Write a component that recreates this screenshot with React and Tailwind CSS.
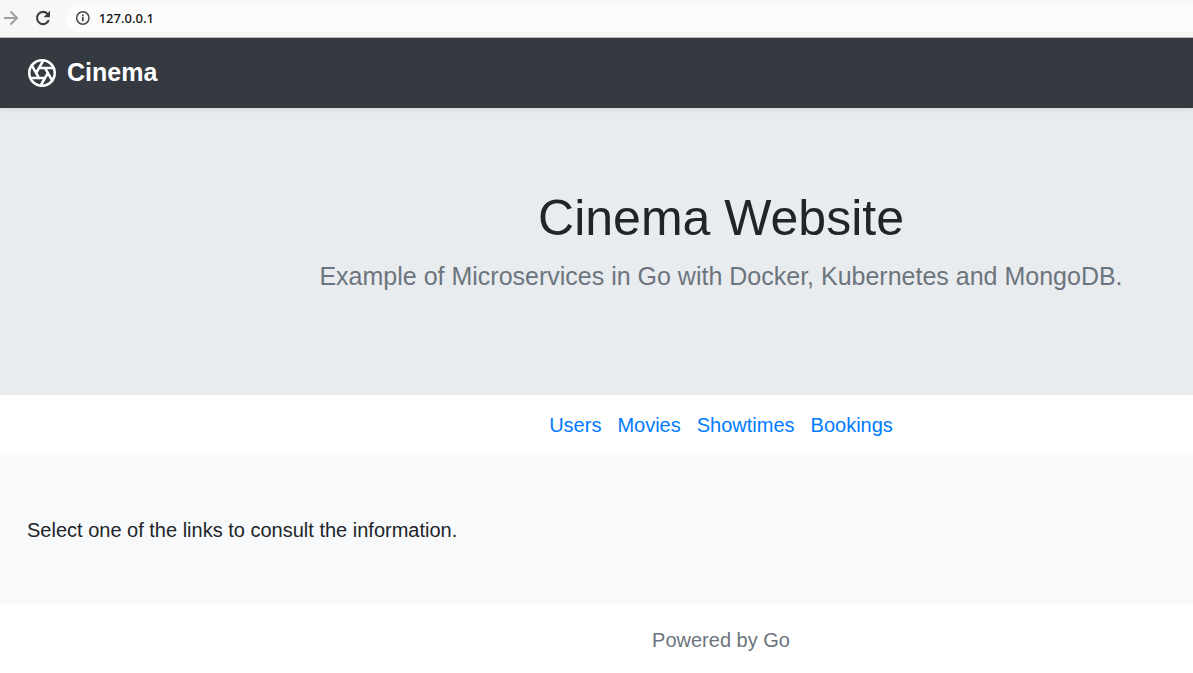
import React from "react";

const links = ["Users", "Movies", "Showtimes", "Bookings"];

function BrowserBar() {
  return (
    <div className="flex h-[38px] border-b border-[#b9bbbd] bg-[#f7f7f7] pt-1 pb-[5px] font-['Noto_Sans',sans-serif]">
      <button type="button" aria-label="Forward" className="flex w-6 items-center text-[#a0a0a0]">
        <svg width="22" height="22" viewBox="0 0 22 22" fill="none" stroke="currentColor" strokeWidth="2">
          <path d="M4 11h13M10.5 4.5L17 11l-6.5 6.5" />
        </svg>
      </button>
      <button type="button" aria-label="Reload" className="flex w-[38px] items-center justify-center text-[#3c3c3c]">
        <svg width="20" height="20" viewBox="0 0 20 20">
          <path d="M15.8 12.2A6.1 6.1 0 1 1 14.6 5.9" fill="none" stroke="currentColor" strokeWidth="2.1" />
          <path d="M17 2.8v6.4h-6.4z" fill="currentColor" />
        </svg>
      </button>
      <label className="ml-[3px] flex flex-1 items-center gap-2 rounded-l-full bg-[#fcfcfc] pl-[10px]">
        <svg width="16" height="16" viewBox="0 0 16 16" fill="none" stroke="#484848" strokeWidth="1.5">
          <circle cx="8" cy="8" r="6.3" />
          <path d="M8 7v4.4M8 4.4v1.7" strokeWidth="1.8" />
        </svg>
        <input aria-label="Address" defaultValue="127.0.0.1" className="w-full bg-transparent text-[13px] font-medium text-[#111] outline-none" />
      </label>
    </div>
  );
}

export default function App() {
  return (
    <div className="min-h-screen overflow-x-hidden bg-white font-['Liberation_Sans',Arial,sans-serif] text-xl leading-[30px] text-[#212529]">
      <BrowserBar />
      <header className="relative z-10 flex h-[70px] items-center bg-[#343a40] px-7 shadow-[0_2px_5px_rgba(0,0,0,0.08)]">
        <a href="#" className="flex items-center gap-[11px] text-[25px] font-bold text-white">
          <svg width="28" height="28" viewBox="1 1 22 22" fill="none" stroke="currentColor" strokeWidth="2" strokeLinecap="round" strokeLinejoin="round">
            <circle cx="12" cy="12" r="10" />
            <path d="M14.31 8l5.74 9.94M9.69 8h11.48M7.38 12l5.74-9.94M9.69 16L3.95 6.06M14.31 16H2.83M16.62 12l-5.74 9.94" />
          </svg>
          <span className="pb-0.5">Cinema</span>
        </a>
      </header>
      <main className="bg-white">
        <section className="-mr-[249px] bg-[#e9ecef] pt-20 pb-[99px] text-center">
          <h1 className="text-[50px] leading-[60px]">Cinema Website</h1>
          <p className="mt-2 text-[25px] leading-10 text-[#6c757d]">Example of Microservices in Go with Docker, Kubernetes and MongoDB.</p>
        </section>
        <nav className="-mr-[249px] flex h-[60px] items-center justify-center gap-4 text-[#007bff]">
          {links.map((l) => <a key={l} href="#">{l}</a>)}
        </nav>
        <section className="bg-[#f8f9fa] px-[27px] py-[60px]"><p>Select one of the links to consult the information.</p></section>
      </main>
      <footer className="-mr-[249px] py-5 text-center text-[#6c757d]">Powered by Go</footer>
    </div>
  );
}
